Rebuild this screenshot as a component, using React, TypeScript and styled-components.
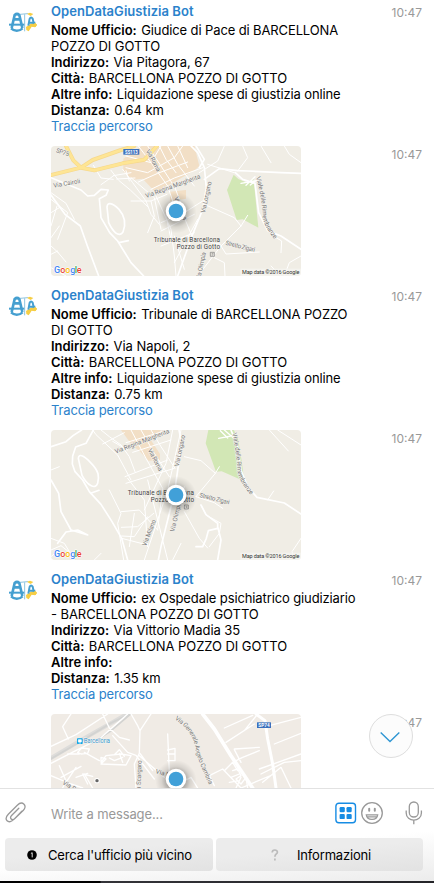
import React from 'react';
import styled, { createGlobalStyle } from 'styled-components';

const Global = createGlobalStyle`
  * { box-sizing: border-box; }
  body { margin: 0; background: #fff; overflow: hidden; }
`;

const Page = styled.div`
  width: 434px;
  height: 883px;
  display: flex;
  flex-direction: column;
  font-family: Inter, 'Liberation Sans', sans-serif;
  font-size: 13px;
  line-height: 16px;
  color: #000;
  background: #fff;
`;

const ChatArea = styled.main`
  position: relative;
  height: 788px;
  flex: none;
  overflow: hidden;
  padding-top: 3px;
`;

const Message = styled.article`
  height: 284px;
  display: grid;
  grid-template-columns: 51px 1fr 60px;
  grid-template-rows: 143px 130px;
`;

const AvatarCell = styled.div`
  padding: 6px 0 0 7px;
`;

const Body = styled.div`
  white-space: nowrap;
`;

const Sender = styled.div`
  height: 16px;
  margin-bottom: 3px;
  font-weight: 600;
  color: #2b82cb;
  letter-spacing: 0.05px;
`;

const Line = styled.div<{ $tight?: boolean }>`
  height: 16px;
  letter-spacing: ${(p) => (p.$tight ? -0.12 : -0.06)}px;
`;

const Label = styled.b`
  font-weight: 600;
  letter-spacing: -0.03px;
  margin-right: 1px;
`;

const RouteLink = styled.a`
  color: #2b82cb;
  letter-spacing: -0.13px;
`;

const Time = styled.time<{ $offset: number }>`
  padding-top: ${(p) => p.$offset}px;
  padding-right: 12px;
  text-align: right;
  font-size: 12px;
  color: #999;
`;

const MapFrame = styled.div`
  grid-column: 2;
  width: 250px;
  height: 130px;
  border-radius: 4px;
  overflow: hidden;
  svg { display: block; }
`;

const ScrollDown = styled.button`
  position: absolute;
  left: 369px;
  top: 714px;
  width: 44px;
  height: 44px;
  padding: 0 2px 0 0;
  border: 1px solid #dedede;
  border-radius: 50%;
  background: #fcfcfc;
  display: grid;
  place-items: center;
`;

const Footer = styled.footer`
  flex: 1;
  display: flex;
  flex-direction: column;
  border-top: 1px solid #e2e2e2;
  background: linear-gradient(175deg, #fff 60%, #ebebeb 100%);
`;

const Composer = styled.div`
  height: 49px;
  display: grid;
  grid-template-columns: 51px 1fr 26px 24px 50px;
  align-items: center;
  svg { display: block; }
`;

const ClipCell = styled.div`
  padding-left: 4px;
  margin-top: -2px;
`;

const IconCell = styled.div`
  margin-top: -2px;
`;

const MicCell = styled.div`
  padding-left: 16px;
  margin-top: -1px;
`;

const Placeholder = styled.div`
  color: #999;
  padding-top: 1px;
  letter-spacing: -0.1px;
`;

const Keyboard = styled.div`
  display: grid;
  grid-template-columns: 208px 207px;
  gap: 3px;
  padding-left: 5px;
`;

const KeyButton = styled.button<{ $left: number; $gap: number }>`
  height: 33px;
  border: 0;
  border-radius: 4px;
  padding: 0 0 0 ${(p) => p.$left}px;
  background: linear-gradient(175deg, #ececec 40%, #e2e2e2);
  display: flex;
  align-items: center;
  gap: ${(p) => p.$gap}px;
  font: inherit;
  letter-spacing: -0.17px;
  color: #000;
  white-space: nowrap;
`;

const ScreenEdge = styled.div`
  height: 2px;
  margin-top: auto;
  background: linear-gradient(90deg, #000 100px, #333338 101px, #242428);
`;

const MapText = styled.text`
  font-family: Roboto, sans-serif;
  font-size: 19px;
  fill: #777;
  stroke: #f4f2ed;
  stroke-width: 3px;
  paint-order: stroke;
`;

const PlaceText = styled(MapText)`
  fill: #444;
`;

const StationText = styled(MapText)`
  fill: #429bd2;
`;

const Credit = styled.text`
  font-family: Roboto, sans-serif;
  font-size: 16.5px;
  fill: #333;
`;

const Logo = styled.text`
  font-family: Roboto, sans-serif;
  font-weight: 500;
  font-size: 27px;
  stroke: #fff;
  stroke-width: 3px;
  paint-order: stroke;
`;

const ShieldText = styled.text`
  font-family: Roboto, sans-serif;
  font-weight: 700;
  font-size: 14px;
  fill: #fff;
`;

const Roads = styled.g<{ $w?: number; $color?: string }>`
  fill: none;
  stroke: ${(p) => p.$color ?? '#fff'};
  stroke-width: ${(p) => p.$w ?? 4};
  stroke-linejoin: round;
  stroke-linecap: round;
`;

function MapOverlay({ id }: { id: string }) {
  return (
    <>
      <defs>
        <radialGradient id={`${id}-shade`}>
          <stop offset="0.4" stopColor="#000" stopOpacity="0.32" />
          <stop offset="0.7" stopColor="#000" stopOpacity="0.1" />
          <stop offset="1" stopColor="#000" stopOpacity="0" />
        </radialGradient>
      </defs>
      <circle cx="375" cy="200" r="62" fill={`url(#${id}-shade)`} />
      <circle cx="375" cy="195" r="31" fill="#fff" />
      <circle cx="375" cy="195" r="22" fill="#41a0d8" />
      <Logo y="380">
        <tspan x="9" fill="#4285f4">G</tspan>
        <tspan x="28" fill="#ea4335">o</tspan>
        <tspan x="43" fill="#fbbc05">o</tspan>
        <tspan x="57.5" fill="#4285f4">g</tspan>
        <tspan x="71.5" fill="#34a853">l</tspan>
        <tspan x="77" fill="#ea4335">e</tspan>
      </Logo>
      <rect x="568" y="368" width="182" height="22" fill="#f5f4f0" opacity="0.8" />
      <Credit x="573" y="384" textLength="172">Map data ©2016 Google</Credit>
    </>
  );
}

function MapOne() {
  return (
    <svg width="250" height="130" viewBox="0 0 750 390">
      <rect width="750" height="390" fill="#f0ede5" />
      <path d="M217 38 272 0H430L445 60 432 72 375 105 312 137 275 98 246 101 217 78Z" fill="#f2dfc6" />
      <path d="M357 137 405 132V158L357 166Z" fill="#f2dfc6" />
      <path d="M548 86 562 99 588 110 607 96 612 140 622 245 575 220 557 222 528 132Z" fill="#d2e7b5" />
      <Roads $w={3}>
        <path d="M240 95 310 155 330 250M262 0 300 50 350 120 375 195M290 0 330 60 372 125 400 200M225 30 300 50 330 0M225 65 290 80 370 35 395 0M262 108 320 82 410 48M300 130 370 96 455 65M350 0 380 55 430 120M325 0 345 40 375 80M380 0 410 65" />
        <path d="M215 70 245 110 285 165 300 205 325 235M180 73 203 103 238 132 290 182M187 89 240 80M197 99 252 96M225 74 235 105M150 116 187 90M127 58 150 96 187 100" />
        <path d="M0 160 50 200 20 280M0 200 25 185M18 180 0 240M0 140 45 172 70 220M0 275 25 240M0 325 20 315M0 365 45 390M20 318 45 348M0 300 22 320" />
        <path d="M240 165 300 165 348 145M300 165 310 210 290 260M315 150 360 250 370 330 375 390M330 230 400 200 455 165M330 255 430 205M330 300 430 260M345 210 360 280 410 310M400 215 425 275M370 270 400 370M440 220 370 350M460 175 550 215 570 240M570 240 590 208M570 240 510 300 440 390M510 300 525 324 625 318M472 276 480 290 508 295" />
        <path d="M630 0 660 50M700 0 715 25 750 50M520 0 500 45 445 80M560 75 590 35 575 0M470 55 550 80M665 268 692 285 690 320M660 360 690 390M700 390 715 350 750 330M490 335 520 350 522 390" />
      </Roads>
      <Roads $w={5}>
        <path d="M0 147 42 205 88 240 110 302 143 390" />
        <path d="M0 95 90 132 110 150 130 148 150 130 172 132 165 148 145 158 148 190 150 215 176 260 200 285 240 350 278 390" />
        <path d="M169 192C163 164 185 170 204 190 225 214 223 240 216 258 204 276 186 258 173 230ZM204 290 232 284" />
        <path d="M420 0 440 20 460 65 466 125 455 190 425 265 405 320 380 390M445 65 460 40 435 0M460 100 505 68 560 74 590 75 690 80 750 82" />
        <path d="M553 80 575 100 612 112 623 200 650 254 690 270 750 310" />
      </Roads>
      <Roads $w={4}><path d="M585 118 612 92M598 117 622 98M570 112 610 105" /></Roads>
      <Roads $w={12} $color="#f6d88c">
        <path d="M0 87 90 65 125 42 210 12 250 0M90 65 130 73 215 52 280 41 318 0M45 0 67 43 90 65" />
      </Roads>
      <Roads $w={8} $color="#fee594">
        <path d="M0 87 90 65 125 42 210 12 250 0M90 65 130 73 215 52 280 41 318 0M45 0 67 43 90 65" />
      </Roads>
      <rect x="217" y="9" width="48" height="17" fill="#3b70bd" />
      <ShieldText x="222" y="22.5" textLength="38" lengthAdjust="spacingAndGlyphs">SS113</ShieldText>
      <MapText transform="translate(14 19) rotate(17)" textLength="40">SP75</MapText>
      <MapText transform="translate(8 125) rotate(-10)" textLength="82">Via Cairoli</MapText>
      <MapText transform="translate(284 14) rotate(62)" textLength="73">Via Roma</MapText>
      <MapText transform="translate(286 156) rotate(-20)" textLength="174">Via Regina Margherita</MapText>
      <MapText transform="translate(462 202) rotate(-78)" textLength="96">Via Longano</MapText>
      <defs><path id="vialeOne" d="M615 94Q631 145 635 205 634 240 680 290" /></defs>
      <MapText><textPath href="#vialeOne" textLength="197">Viale delle Rimembranze</textPath></MapText>
      <MapText transform="translate(523 296) rotate(14)" textLength="90">Stretto Zigari</MapText>
      <MapText transform="translate(447 404) rotate(-78)" textLength="86">Via Olimpia</MapText>
      <MapText transform="translate(369 155) rotate(68)" textLength="74">Via Roma</MapText>
      <PlaceText x="308" y="288" textLength="199">Tribunale di Barcellona</PlaceText>
      <PlaceText x="377" y="308" textLength="130">Pozzo di Gotto</PlaceText>
      <path d="M478 319h12v12h-12zM482 323h5M482 327h5" fill="none" stroke="#777" strokeWidth="2" />
      <MapOverlay id="one" />
    </svg>
  );
}

function MapTwo() {
  return (
    <svg width="250" height="130" viewBox="0 0 750 390">
      <rect width="750" height="390" fill="#f0ede5" />
      <path d="M210 0H330L302 34 327 72V90L292 92 268 65 242 44Z" fill="#f2dfc6" />
      <path d="M472 0H548L560 20 572 92 580 154 512 124 495 125 464 40Z" fill="#d2e7b5" />
      <Roads $w={3}>
        <path d="M150 0 175 20 210 45 235 80 252 125M125 0 135 14 200 75 240 150M155 42 220 8M185 34 230 60M225 38 350 0M245 67 360 30M222 140 350 90M225 160 370 115M240 0 285 85 335 175 320 300M270 0 310 70 355 140M300 0 330 50 372 115M230 145 280 210 290 350M290 150 350 390M365 0 345 100 280 240M390 0 350 180 280 390" />
        <path d="M175 180 210 250 200 280 218 390M211 245 265 240 320 300M211 292 260 290 308 250M212 318 250 320 290 260M212 325 290 345M250 250 235 350M400 80 450 92 493 130 505 110M493 130 435 200M435 200 490 218 515 235M450 225 465 255 510 280 505 310 475 350M400 245 445 325 470 354M650 210 668 183M655 0 712 63M680 0 750 45M750 325 723 365 730 390M390 340 365 390M410 240 390 220 400 170" />
        <path d="M0 325 40 340 70 390M0 360 30 347 50 363M0 380 25 358M10 368 75 374M130 390 150 370M0 120 25 110" />
      </Roads>
      <Roads $w={5}>
        <path d="M0 50 45 35 66 17 92 0M127 0 105 40 74 51 65 78 64 102 72 125 95 150 115 185 150 223 183 275 212 325 230 390" />
        <path d="M82 85C83 68 102 79 118 97 145 124 145 140 140 160 133 181 108 165 93 136ZM119 190 144 181" />
        <path d="M0 150 23 190 30 245 60 300 110 315 80 300 45 306 20 340" />
        <path d="M384 0 391 35 386 80 370 190 330 350 322 390M540 0 560 50 570 120 590 170 618 202 700 219 750 252" />
        <path d="M450 225 465 254 500 280 500 295 472 302 466 325 455 350 435 350M500 290 510 330 500 390" />
      </Roads>
      <Roads $w={4}><path d="M508 2 530 24M520 0 545 22M503 25 555 15" /></Roads>
      <MapText transform="translate(194 71) rotate(-21)" textLength="174">Via Regina Margherita</MapText>
      <MapText transform="translate(290 60) rotate(62)" textLength="73">Via Roma</MapText>
      <MapText transform="translate(383 110) rotate(-78)" textLength="96">Via Longano</MapText>
      <defs><path id="vialeTwo" d="M544 10Q557 70 559 120 561 153 608 205" /></defs>
      <MapText><textPath href="#vialeTwo" textLength="197">Viale delle Rimembranze</textPath></MapText>
      <MapText transform="translate(445 201) rotate(14)" textLength="92">Stretto Zigari</MapText>
      <MapText transform="translate(285 350) rotate(-69)" textLength="84">Via Milano</MapText>
      <MapText transform="translate(370 306) rotate(-77)" textLength="94">Via Olimpia</MapText>
      <PlaceText x="230" y="195" textLength="199">Tribunale di Barcellona</PlaceText>
      <PlaceText x="299" y="215" textLength="130">Pozzo di Gotto</PlaceText>
      <path d="M400 225h12v12h-12zM404 229h5M404 233h5" fill="none" stroke="#777" strokeWidth="2" />
      <MapOverlay id="two" />
    </svg>
  );
}

function MapThree() {
  return (
    <svg width="250" height="130" viewBox="0 0 750 390">
      <rect width="750" height="390" fill="#f0ebe5" />
      <Roads $w={12} $color="#dddcda"><path d="M0 132 100 73 235-4" /></Roads>
      <Roads $w={5} $color="#d3d3d1"><path d="M0 134 100 76 180 27 240-2M120 89 175 54 245-5" /></Roads>
      <Roads $w={4}>
        <path d="M0 97 75 62 170 0M0 148 80 107 145 75 230 0M60 0 35 38 52 75M155 0 175 42 205 70 235 78M185 65 200 82 230 115 255 124 310 195M80 115 92 102 115 105 110 118 90 120ZM50 120 85 120M100 115 145 140" />
        <path d="M240 0 260 35 267 50 265 118 250 150 255 222M300 0 267 50M267 118 305 170M265 125 340 190M350 60 357 222M350 108 372 103V140H350M372 120H350M150 130 165 135 150 150 225 153 240 125 210 120 165 125 150 145ZM190 122 205 107 220 127M175 132 190 140 215 130M205 118 215 145" />
        <path d="M25 155 45 200 35 222M0 185 60 210 95 222M30 190 90 157M75 190 110 178M100 180 125 222M45 205 75 160M110 210 95 180 125 187M360 222 420 190 440 222M490 215 475 185 515 165 570 222M520 170 545 145 575 130 625 110M545 145 560 170M550 105 625 100M550 107 570 145M520 42 605 4M525 85 610 30M620 0 580 50M655 35 750 10M670 90 750 58M625 165 750 120M630 180 700 145 750 140M635 205 690 160 720 222M570 222 670 180" />
        <path d="M545 170 560 165 570 185 555 195 570 210 585 190 590 222M540 190 565 180M535 205 565 200M555 222 570 190" />
      </Roads>
      <Roads $w={11}><path d="M455 0 490 45 540 125 605 222" /></Roads>
      <Roads $w={9}><path d="M615 0 642 20 650 75 665 150 675 222" /></Roads>
      <rect x="618" y="25" width="42" height="17" fill="#3b70bd" />
      <ShieldText x="622" y="38.5" textLength="34" lengthAdjust="spacingAndGlyphs">SP74</ShieldText>
      <rect x="78" y="73" width="17" height="17" rx="2" fill="#0ba5e8" />
      <path d="M82 77h9v7h-9zM83 87h7" fill="#fff" stroke="#fff" strokeWidth="2" />
      <StationText x="98" y="87" textLength="79">Barcellona</StationText>
      <defs><path id="angelo" d="M371 16Q430 54 434 110 448 158 476 215" /></defs>
      <MapText><textPath href="#angelo" textLength="228">Via Generale Angelo Cambria</textPath></MapText>
      <MapText transform="translate(268 244) rotate(-88)" textLength="105">Via Scargaro</MapText>
      <MapText transform="translate(33 209) rotate(32)">Via Roma</MapText>
      <MapText transform="translate(313 178) rotate(14)">Via Madia</MapText>
      <circle cx="138" cy="200" r="8" fill="#fff" />
      <circle cx="138" cy="200" r="5" fill="#666" />
      <MapOverlay id="three" />
    </svg>
  );
}

function Avatar() {
  return (
    <svg width="34" height="26" viewBox="21 27 102 78">
      <path d="M80 41 90 38 100 42 92 48ZM78 81 90 73 103 67 111 74 107 81 95 80 86 94 79 90Z" fill="#f6ce45" />
      <g fill="none" stroke="#459fd0" strokeWidth="8" strokeLinejoin="round">
        <path d="M35 84 44 45Q51 39 58 45L67 84M40 58H63" />
        <path d="M27 74H73" strokeWidth="6" />
        <path d="M33 85Q50 100 68 85" strokeWidth="7" />
        <path d="M85 77 89 56Q93 49 98 56L103 77M86 68H106" strokeWidth="6" />
        <path d="M74 43V94M60 43 83 41" strokeWidth="2.5" stroke="#77b7da" />
      </g>
      <path d="M96 74 106 69 111 75 105 82 97 80Z" fill="#f6ce45" />
    </svg>
  );
}

interface Office {
  name: string[];
  address: string;
  info: string;
  distance: string;
  map: React.ReactNode;
}

const offices: Office[] = [
  { name: ['Giudice di Pace di BARCELLONA', 'POZZO DI GOTTO'], address: 'Via Pitagora, 67', info: 'Liquidazione spese di giustizia online', distance: '0.64 km', map: <MapOne /> },
  { name: ['Tribunale di BARCELLONA POZZO', 'DI GOTTO'], address: 'Via Napoli, 2', info: 'Liquidazione spese di giustizia online', distance: '0.75 km', map: <MapTwo /> },
  { name: ['ex Ospedale psichiatrico giudiziario', '- BARCELLONA POZZO DI GOTTO'], address: 'Via Vittorio Madia 35', info: '', distance: '1.35 km', map: <MapThree /> },
];

function OfficeMessage({ office }: { office: Office }) {
  return (
    <Message>
      <AvatarCell><Avatar /></AvatarCell>
      <Body>
        <Sender>OpenDataGiustizia Bot</Sender>
        <Line $tight><Label>Nome Ufficio:</Label> {office.name[0]}</Line>
        <Line>{office.name[1]}</Line>
        <Line><Label>Indirizzo:</Label> {office.address}</Line>
        <Line><Label>Città:</Label> BARCELLONA POZZO DI GOTTO</Line>
        <Line $tight><Label>Altre info:</Label> {office.info}</Line>
        <Line><Label>Distanza:</Label> {office.distance}</Line>
        <Line><RouteLink>Traccia percorso</RouteLink></Line>
      </Body>
      <Time $offset={2}>10:47</Time>
      <MapFrame>{office.map}</MapFrame>
      <Time $offset={1}>10:47</Time>
    </Message>
  );
}

export default function App() {
  return (
    <Page>
      <Global />
      <ChatArea>
        {offices.map((o) => <OfficeMessage key={o.address} office={o} />)}
        <ScrollDown aria-label="Scroll down">
          <svg width="22" height="14" viewBox="0 0 22 14" fill="none" stroke="#2f96d3" strokeWidth="1.4">
            <path d="M1.7 3.5 11 12.5 20.3 3.5" />
          </svg>
        </ScrollDown>
      </ChatArea>
      <Footer>
        <Composer>
          <ClipCell>
            <svg width="24" height="24" viewBox="0 0 24 24" fill="none" stroke="#999" strokeWidth="1.3" strokeLinecap="round">
              <path d="M17.8 10.3 9.9 18.4C7.6 20.7 4.8 21.6 3.1 19.8 1.5 18.1 2.2 15.5 4.3 13.3L13.3 4.2C15.3 2.2 18.1 1.4 20 3.2 21.8 5 21.1 7.5 19.4 9.2L11.1 17.4C9.8 18.7 8.1 18.9 7.2 18 6.2 17 6.6 15.4 7.8 14.2L14.8 7.2" />
            </svg>
          </ClipCell>
          <Placeholder>Write a message...</Placeholder>
          <IconCell>
            <svg width="23" height="22" viewBox="0 0 23 22">
              <rect x="1.9" y="1.2" width="19.6" height="19.6" rx="3" fill="none" stroke="#168ce4" strokeWidth="1.4" />
              <g fill="#168ce4">
                <rect x="5.6" y="5" width="5.2" height="5.2" rx="1.2" />
                <rect x="12.5" y="5" width="5.2" height="5.2" rx="1.2" />
                <rect x="5.6" y="11.9" width="5.2" height="5.2" rx="1.2" />
                <rect x="12.5" y="11.9" width="5.2" height="5.2" rx="1.2" />
              </g>
            </svg>
          </IconCell>
          <IconCell>
            <svg width="24" height="24" viewBox="0 0 24 24" fill="none" stroke="#999" strokeWidth="1.3">
              <circle cx="12" cy="12" r="10.3" />
              <path d="M6.3 13.8H17.7C17 20 7 20 6.3 13.8ZM7.3 15.8H16.7" />
              <path d="M9.2 7.8V9.8M14.8 7.8V9.8" strokeWidth="2" strokeLinecap="round" />
            </svg>
          </IconCell>
          <MicCell>
            <svg width="28" height="26" viewBox="0 0 28 26" fill="none" stroke="#999" strokeWidth="1.3">
              <rect x="9.3" y="2" width="9" height="15" rx="4.5" />
              <path d="M6.2 10.5V13C6.2 22.5 21.4 22.5 21.4 13V10.5M13.8 20V24.2" />
            </svg>
          </MicCell>
        </Composer>
        <Keyboard>
          <KeyButton $left={22} $gap={11}>
            <svg width="10" height="10" viewBox="0 0 10 10">
              <circle cx="5" cy="5" r="4.8" fill="#000" />
              <path d="M3.9 3.5 5.2 2.7V7.4" fill="none" stroke="#ddd" strokeWidth="1" />
            </svg>
            Cerca l'ufficio più vicino
          </KeyButton>
          <KeyButton $left={55} $gap={18}>
            <svg width="8" height="12" viewBox="0 0 8 12" fill="none" stroke="#bbb" strokeWidth="1.7">
              <path d="M1.2 3.5C1.2.2 6.6.3 6.4 3.2 6.3 5 3.9 5 3.9 7.7M3.9 9.6V11.5" />
            </svg>
            Informazioni
          </KeyButton>
        </Keyboard>
        <ScreenEdge />
      </Footer>
    </Page>
  );
}
